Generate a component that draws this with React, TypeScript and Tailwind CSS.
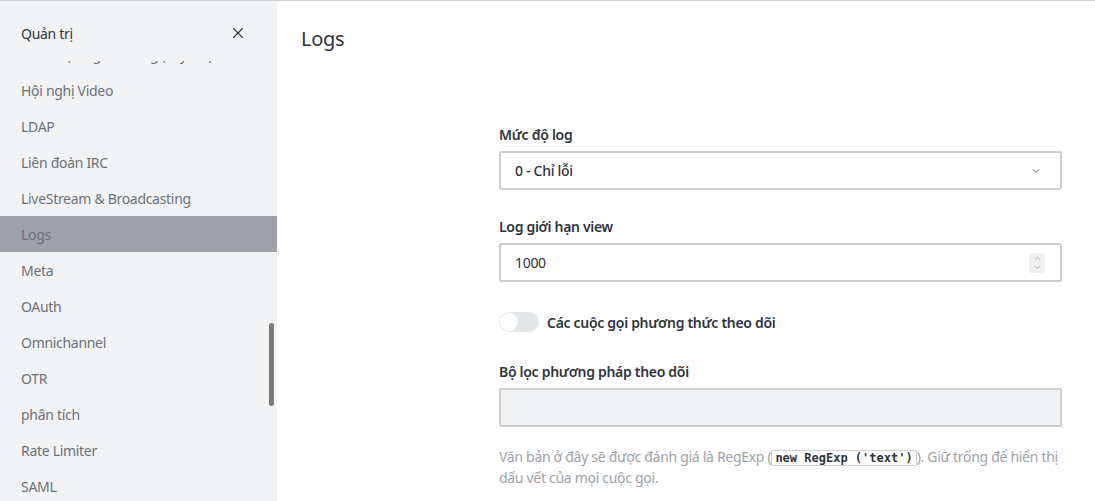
import { X, ChevronDown, ChevronUp } from 'lucide-react';

const menuItems = [
  'Giao diện người dùng (Layout)',
  'Hội nghị Video',
  'LDAP',
  'Liên đoàn IRC',
  'LiveStream & Broadcasting',
  'Logs',
  'Meta',
  'OAuth',
  'Omnichannel',
  'OTR',
  'phân tích',
  'Rate Limiter',
  'SAML',
];

const Sidebar = () => (
  <aside className="w-[277px] shrink-0 bg-[#f2f3f5] flex flex-col relative overflow-hidden">
    <div className="h-[60px] shrink-0 flex items-center justify-between pl-[21px] pr-[30px] pt-[4px]">
      <span className="text-[14px] text-[#2f343d]">Quản trị</span>
      <X size={18} strokeWidth={1.5} className="text-[#2f343d]" />
    </div>
    <div className="flex-1 overflow-hidden">
      <div className="-mt-[25px]">
        {menuItems.map((item) => (
          <div
            key={item}
            className={`h-[36px] flex items-center pl-[21px] text-[14px] text-[#6c727a] ${
              item === 'Logs' ? 'bg-[#9ea2a8]' : ''
            }`}
          >
            {item}
          </div>
        ))}
      </div>
    </div>
    <div className="absolute left-[269px] top-[322px] w-[5px] h-[83px] rounded-full bg-[#7a7a7a]" />
  </aside>
);

const Label = ({ children }: { children: React.ReactNode }) => (
  <div className="text-[14px] font-semibold text-[#2f343d] h-[20px] leading-[20px] mb-[6px]">{children}</div>
);

export default function App() {
  return (
    <div
      className="w-[1095px] h-[501px] flex border-t border-[#cfd0d2] bg-white overflow-hidden tracking-[-0.3px]"
      style={{ fontFamily: '"Noto Sans", "Open Sans", sans-serif' }}
    >
      <Sidebar />
      <main className="flex-1 flex flex-col">
        <div className="h-[76px] shrink-0 flex items-center pl-[24px]">
          <h1 className="text-[20px] text-[#2f343d]">Logs</h1>
        </div>
        <div className="ml-[222px] w-[563px] pt-[48px] flex flex-col">
          <Label>Mức độ log</Label>
          <div className="h-[39px] border-2 border-[#cbced1] rounded-[2px] flex items-center justify-between pl-[14px] pr-[18px]">
            <span className="text-[14px] font-medium text-[#2f343d]">0 - Chỉ lỗi</span>
            <ChevronDown size={12} strokeWidth={1.5} className="text-[#2f343d]" />
          </div>

          <div className="mt-[27px]">
            <Label>Log giới hạn view</Label>
          </div>
          <div className="h-[39px] border-2 border-[#cbced1] rounded-[2px] flex items-center justify-between pl-[14px] pr-[15px]">
            <span className="text-[14px] text-[#2f343d]">1000</span>
            <div className="w-[16px] h-[20px] bg-[#eef0f2] rounded-[2px] flex flex-col items-center justify-center text-[#9ea2a8]">
              <ChevronUp size={9} strokeWidth={2} />
              <ChevronDown size={9} strokeWidth={2} />
            </div>
          </div>

          <div className="mt-[29px] flex items-center h-[22px]">
            <div className="w-[40px] h-[20px] rounded-full bg-[#e4e7ea] relative">
              <div className="absolute left-[1px] top-[1px] w-[18px] h-[18px] rounded-full bg-white" />
            </div>
            <span className="ml-[8px] text-[14px] font-semibold text-[#2f343d]">Các cuộc gọi phương thức theo dõi</span>
          </div>

          <div className="mt-[29px]">
            <Label>Bộ lọc phương pháp theo dõi</Label>
          </div>
          <div className="h-[39px] border-2 border-[#cbced1] rounded-[2px] bg-[#f1f2f4]" />

          <p className="mt-[20px] text-[14px] leading-[20px] text-[#9ea2a8]">
            Văn bản ở đây sẽ được đánh giá là RegExp (
            <code
              className="text-[12px] font-bold text-[#2f343d] bg-white border border-[#cbced1] rounded-[2px] px-[3px] tracking-normal"
              style={{ fontFamily: '"DejaVu Sans Mono", "Liberation Mono", monospace' }}
            >
              new RegExp ('text')
            </code>
            ). Giữ trống để hiển thị dấu vết của mọi cuộc gọi.
          </p>
        </div>
      </main>
    </div>
  );
}
